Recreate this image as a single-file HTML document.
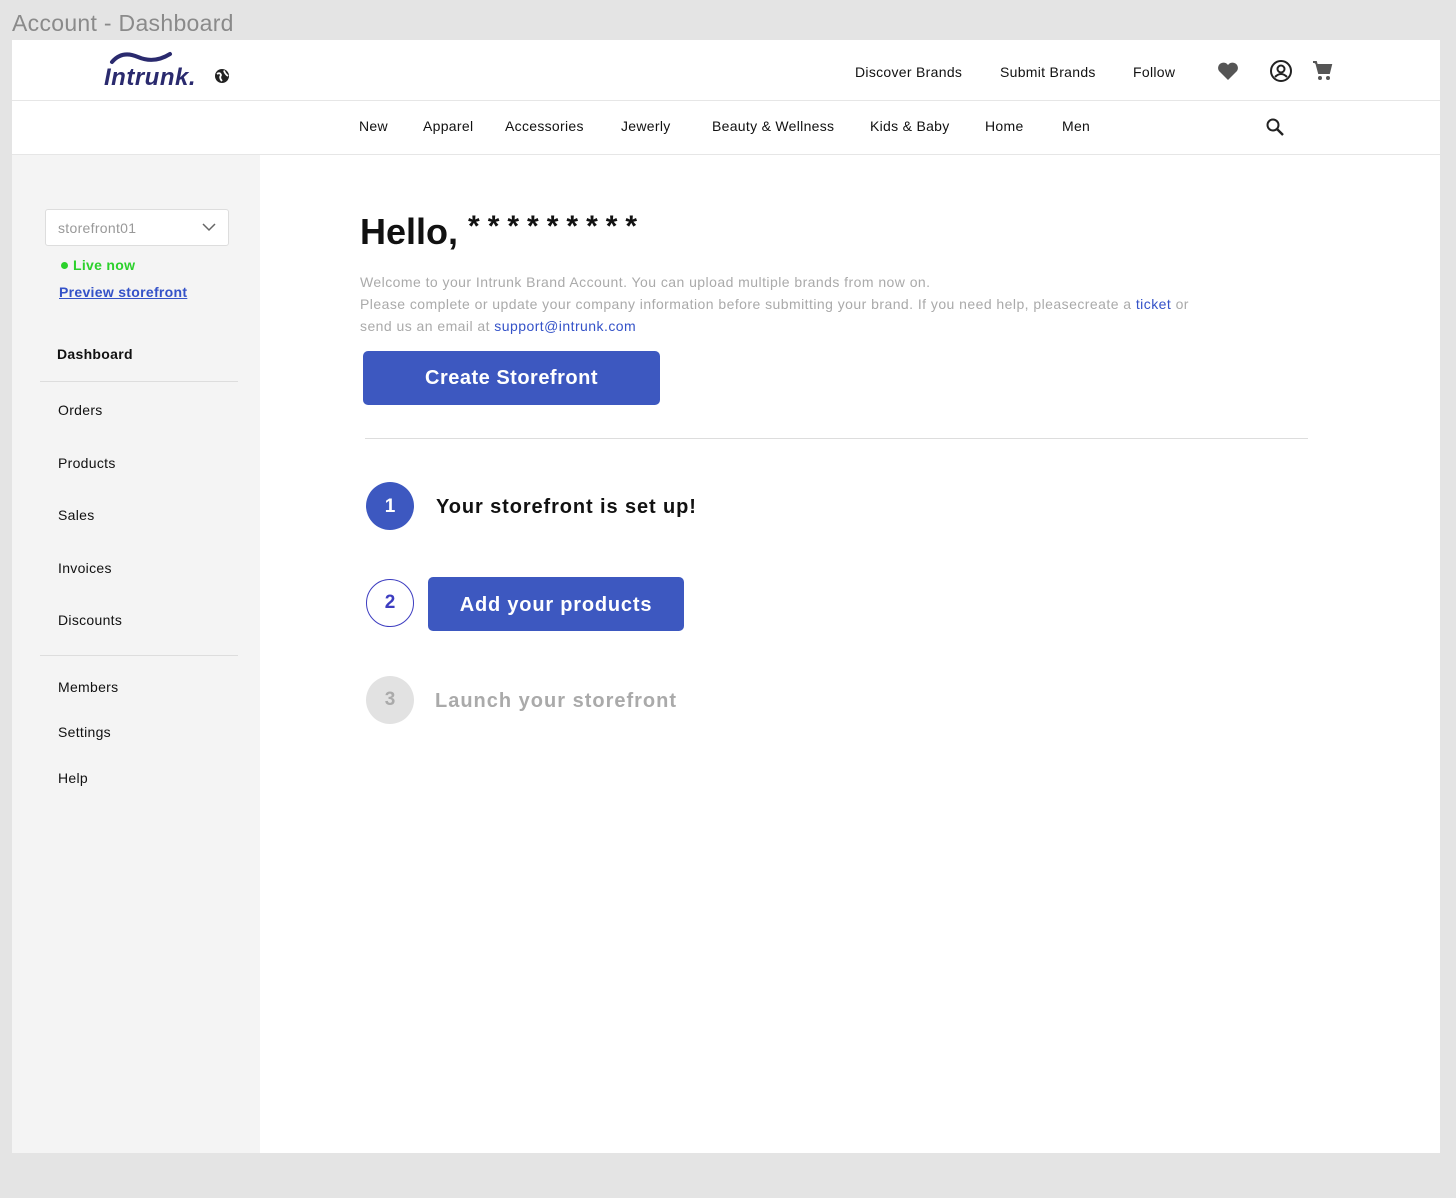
<!DOCTYPE html>
<html><head><meta charset="utf-8"><style>
*{margin:0;padding:0;box-sizing:border-box}
body{width:1456px;height:1198px;background:#e4e4e4;font-family:"Liberation Sans",sans-serif;position:relative;overflow:hidden;color:#111}
.a{position:absolute}
.t{white-space:nowrap}
.n{font-size:14px;letter-spacing:.3px}
</style></head><body>
<div class="a t" style="left:12px;top:10px;font-size:23px;color:#8a8a8a;letter-spacing:.3px">Account - Dashboard</div>
<div class="a" style="left:12px;top:40px;width:1428px;height:1113px;background:#fff"></div>
<div class="a" style="left:12px;top:100px;width:1428px;height:1px;background:#e6e6e6"></div>
<div class="a" style="left:12px;top:154px;width:1428px;height:1px;background:#e6e6e6"></div>
<svg class="a" style="left:108px;top:48px" width="66" height="20"><path d="M4 14 Q14 2 30 9 Q46 16 62 6" stroke="#2a2a6e" stroke-width="4" fill="none" stroke-linecap="round"/></svg>
<div class="a t" style="left:104px;top:64px;font-size:24px;font-style:italic;font-weight:bold;color:#2a2a6e;letter-spacing:.5px">Intrunk.</div>
<svg class="a" style="left:214px;top:68px" width="16" height="16"><circle cx="8" cy="8" r="7" fill="#222"/><path d="M3 6 Q6 4 7 7 Q5 10 8 13 M10 2.5 Q11 6 14 8" stroke="#fff" stroke-width="1.8" fill="none"/></svg>
<div class="a t n" style="left:855px;top:64px">Discover Brands</div>
<div class="a t n" style="left:1000px;top:64px">Submit Brands</div>
<div class="a t n" style="left:1133px;top:64px">Follow</div>
<svg class="a" style="left:1217px;top:61px" width="22" height="20"><path d="M11 19 L2 10 A5 5 0 0 1 11 4 A5 5 0 0 1 20 10 Z" fill="#555"/></svg>
<svg class="a" style="left:1269px;top:59px" width="24" height="24"><circle cx="12" cy="12" r="10" stroke="#222" stroke-width="2" fill="none"/><circle cx="12" cy="10" r="3.5" stroke="#222" stroke-width="2" fill="none"/><path d="M6 18 Q12 12 18 18" stroke="#222" stroke-width="2" fill="none"/></svg>
<svg class="a" style="left:1312px;top:60px" width="22" height="22"><path d="M1 2 H4 L7 13 H17 L19 5 H5" fill="#555" stroke="#555" stroke-width="2"/><circle cx="8" cy="18" r="2" fill="#555"/><circle cx="16" cy="18" r="2" fill="#555"/></svg>
<div class="a t n" style="left:359px;top:118px">New</div>
<div class="a t n" style="left:423px;top:118px">Apparel</div>
<div class="a t n" style="left:505px;top:118px">Accessories</div>
<div class="a t n" style="left:621px;top:118px">Jewerly</div>
<div class="a t n" style="left:712px;top:118px">Beauty &amp; Wellness</div>
<div class="a t n" style="left:870px;top:118px">Kids &amp; Baby</div>
<div class="a t n" style="left:985px;top:118px">Home</div>
<div class="a t n" style="left:1062px;top:118px">Men</div>
<svg class="a" style="left:1265px;top:117px" width="20" height="20"><circle cx="8" cy="8" r="5.5" stroke="#222" stroke-width="2" fill="none"/><path d="M12 12 L18 18" stroke="#222" stroke-width="2.4"/></svg>
<div class="a" style="left:12px;top:155px;width:248px;height:998px;background:#f4f4f4"></div>
<div class="a" style="left:45px;top:209px;width:184px;height:37px;background:#fff;border:1px solid #ddd;border-radius:3px"></div>
<div class="a t n" style="left:58px;top:220px;color:#999">storefront01</div>
<svg class="a" style="left:202px;top:222px" width="14" height="10"><path d="M1 2 L7 8 L13 2" stroke="#666" stroke-width="1.5" fill="none"/></svg>
<div class="a" style="left:61px;top:262px;width:7px;height:7px;border-radius:50%;background:#2bd12b"></div>
<div class="a t n" style="left:73px;top:257px;font-weight:bold;color:#2bd12b">Live now</div>
<div class="a t n" style="left:59px;top:284px;font-weight:bold;color:#3452c8;text-decoration:underline">Preview storefront</div>
<div class="a t n" style="left:57px;top:346px;font-weight:bold">Dashboard</div>
<div class="a" style="left:40px;top:381px;width:198px;height:1px;background:#ddd"></div>
<div class="a t n" style="left:58px;top:402px">Orders</div>
<div class="a t n" style="left:58px;top:455px">Products</div>
<div class="a t n" style="left:58px;top:507px">Sales</div>
<div class="a t n" style="left:58px;top:560px">Invoices</div>
<div class="a t n" style="left:58px;top:612px">Discounts</div>
<div class="a" style="left:40px;top:655px;width:198px;height:1px;background:#ddd"></div>
<div class="a t n" style="left:58px;top:679px">Members</div>
<div class="a t n" style="left:58px;top:724px">Settings</div>
<div class="a t n" style="left:58px;top:770px">Help</div>
<div class="a t" style="left:360px;top:210px;font-size:36px;font-weight:bold">Hello, <span style="font-size:30px;letter-spacing:8px;vertical-align:8px">*********</span></div>
<div class="a" style="left:360px;top:271px;font-size:14px;letter-spacing:.45px;color:#aaa;line-height:22px;width:950px">Welcome to your Intrunk Brand Account. You can upload multiple brands from now on.<br>Please complete or update your company information before submitting your brand. If you need help, pleasecreate a <span style="color:#3452c8">ticket</span> or<br>send us an email at <span style="color:#3452c8">support@intrunk.com</span></div>
<div class="a" style="left:363px;top:351px;width:297px;height:54px;background:#3d58c0;border-radius:5px;color:#fff;font-size:20px;font-weight:bold;text-align:center;line-height:54px;letter-spacing:.5px">Create Storefront</div>
<div class="a" style="left:365px;top:438px;width:943px;height:1px;background:#ddd"></div>
<div class="a" style="left:366px;top:482px;width:48px;height:48px;border-radius:50%;background:#3d58c0;color:#fff;font-size:19px;font-weight:bold;text-align:center;line-height:50px">1</div>
<div class="a t" style="left:436px;top:496px;font-size:20px;font-weight:bold;letter-spacing:.9px">Your storefront is set up!</div>
<div class="a" style="left:366px;top:579px;width:48px;height:48px;border-radius:50%;border:1px solid #3d3dc0;color:#3d3dc0;font-size:19px;font-weight:bold;text-align:center;line-height:46px">2</div>
<div class="a" style="left:428px;top:577px;width:256px;height:54px;background:#3d58c0;border-radius:5px;color:#fff;font-size:20px;font-weight:bold;text-align:center;line-height:56px;letter-spacing:.8px">Add your products</div>
<div class="a" style="left:366px;top:676px;width:48px;height:48px;border-radius:50%;background:#e2e2e2;color:#aaa;font-size:19px;font-weight:bold;text-align:center;line-height:48px">3</div>
<div class="a t" style="left:435px;top:690px;font-size:20px;font-weight:bold;color:#aaa;letter-spacing:1px">Launch your storefront</div>
</body></html>
